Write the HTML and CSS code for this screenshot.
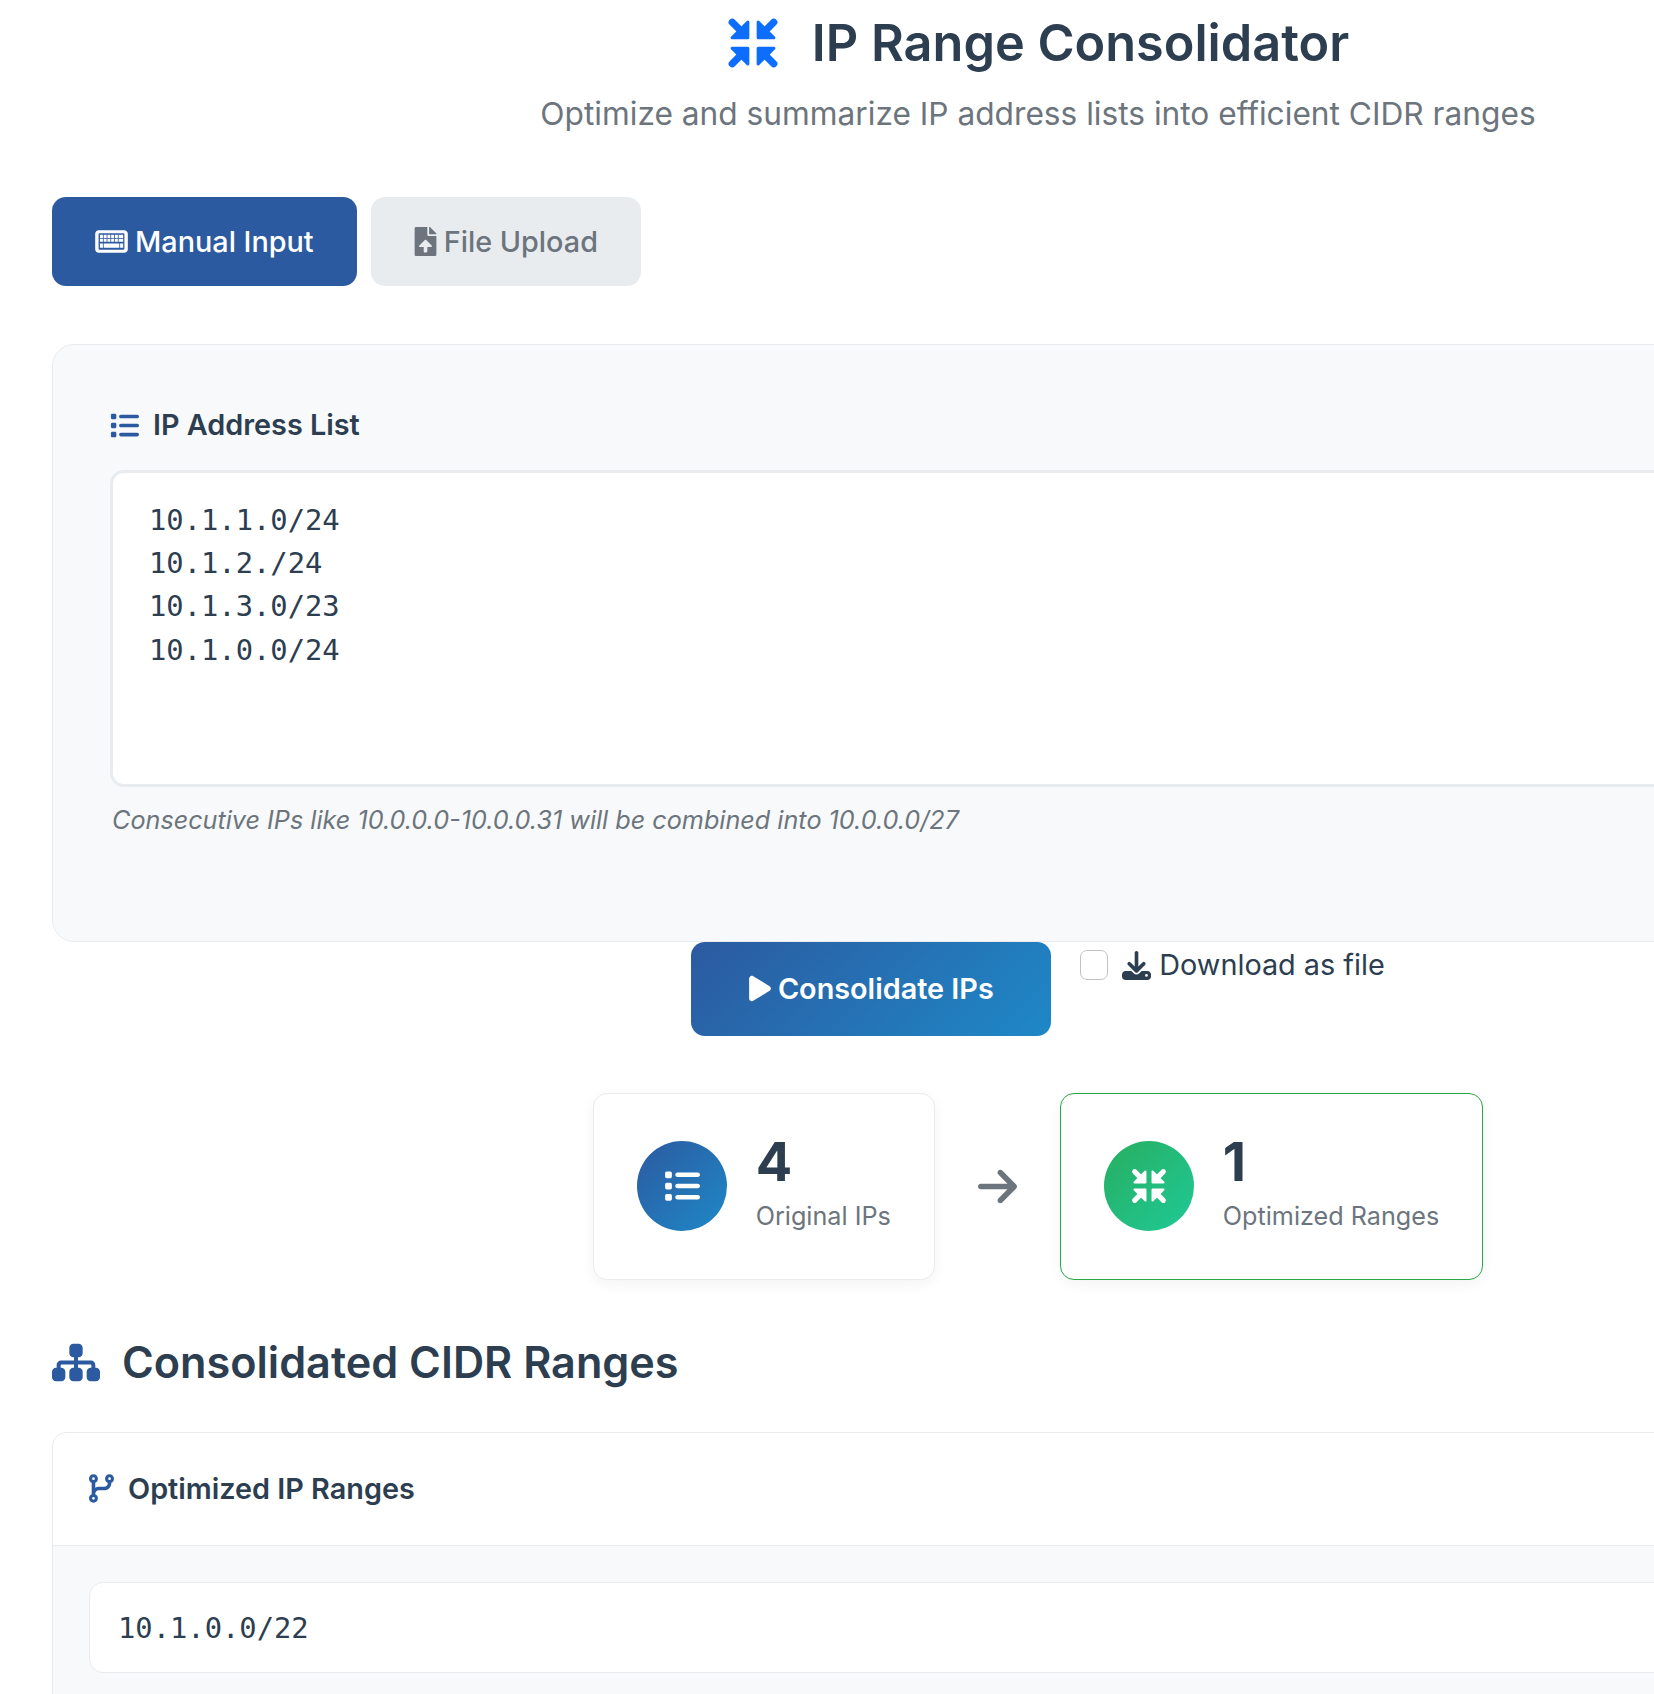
FILE: index.html
```html
<!DOCTYPE html>
<html lang="en">

<head>
  <meta charset="UTF-8">
  <title>IP Range Consolidator</title>
  <link rel="stylesheet" href="styles.css">
</head>

<body>
  <svg class="defs" width="0" height="0">
    <symbol id="i-compress" viewBox="0 0 512 512">
      <g stroke="currentColor" stroke-linejoin="round" stroke-width="30">
        <path d="M205 205H50L205 50z"/>
        <path d="M307 205H462L307 50z"/>
        <path d="M205 307H50L205 462z"/>
        <path d="M307 307H462L307 462z"/>
      </g>
      <g stroke="currentColor" stroke-linecap="round" stroke-width="72">
        <path d="M52 52L140 140"/>
        <path d="M460 52L372 140"/>
        <path d="M52 460L140 372"/>
        <path d="M460 460L372 372"/>
      </g>
    </symbol>
    <symbol id="i-keyboard" viewBox="0 0 576 512"><path fill-rule="evenodd" d="M64 56C28.700 56 0 84.700 0 120V392c0 35.300 28.700 64 64 64H512c35.300 0 64-28.700 64-64V120c0-35.300-28.700-64-64-64H64zM60 128c0-8.800 7.200-16 16-16H500c8.800 0 16 7.200 16 16V384c0 8.800-7.200 16-16 16H76c-8.800 0-16-7.200-16-16V128z"/><path d="M84 138h52v54H84zM150 138h52v54h-52zM216 138h52v54h-52zM282 138h52v54h-52zM348 138h52v54h-52zM414 138h80v54h-80zM84 206h52v54H84zM150 206h52v54h-52zM216 206h52v54h-52zM282 206h52v54h-52zM348 206h52v54h-52zM414 206h80v54h-80zM84 292h52v76H84zM150 292h276v76H150zM440 292h54v76h-54z"/></symbol>
    <symbol id="i-upload" viewBox="0 0 384 512"><path d="M224 136V0H24C10.700 0 0 10.700 0 24v464c0 13.300 10.700 24 24 24h336c13.300 0 24-10.700 24-24V160H248c-13.200 0-24-10.800-24-24zm65.180 216.010H224v80c0 8.840-7.160 16-16 16h-32c-8.840 0-16-7.160-16-16v-80H94.820c-14.280 0-21.410-17.290-11.270-27.360l96.420-95.700c6.650-6.610 17.390-6.610 24.040 0l96.420 95.700c10.150 10.070 3.030 27.360-11.250 27.360zM377 105L279.100 7c-4.500-4.500-10.600-7-17-7H256v128h128v-6.100c0-6.300-2.500-12.400-7-16.900z"/></symbol>
    <symbol id="i-list" viewBox="0 0 512 512"><path d="M40 48C26.700 48 16 58.700 16 72v48c0 13.300 10.700 24 24 24H88c13.300 0 24-10.700 24-24V72c0-13.300-10.700-24-24-24H40zM192 64c-17.700 0-32 14.300-32 32s14.300 32 32 32H480c17.700 0 32-14.300 32-32s-14.300-32-32-32H192zm0 160c-17.700 0-32 14.300-32 32s14.300 32 32 32H480c17.700 0 32-14.300 32-32s-14.300-32-32-32H192zm0 160c-17.700 0-32 14.300-32 32s14.300 32 32 32H480c17.700 0 32-14.300 32-32s-14.300-32-32-32H192zM16 232v48c0 13.300 10.700 24 24 24H88c13.300 0 24-10.700 24-24V232c0-13.300-10.700-24-24-24H40c-13.300 0-24 10.700-24 24zM40 368c-13.300 0-24 10.700-24 24v48c0 13.300 10.700 24 24 24H88c13.300 0 24-10.700 24-24V392c0-13.300-10.700-24-24-24H40z"/></symbol>
    <symbol id="i-play" viewBox="0 0 384 512"><path d="M73 39c-14.800-9.100-33.400-9.400-48.500-.9S0 62.600 0 80V432c0 17.400 9.400 33.400 24.500 41.900s33.700 8.100 48.500-.9L361 297c14.300-8.700 23-24.200 23-41s-8.700-32.200-23-41L73 39z"/></symbol>
    <symbol id="i-download" viewBox="0 0 512 512"><path d="M288 32c0-17.700-14.300-32-32-32s-32 14.300-32 32V274.700l-73.400-73.400c-12.500-12.500-32.800-12.500-45.300 0s-12.500 32.800 0 45.300l128 128c12.500 12.500 32.800 12.500 45.300 0l128-128c12.500-12.500 12.500-32.800 0-45.300s-32.800-12.500-45.300 0L288 274.700V32zM64 352c-35.300 0-64 28.700-64 64v32c0 35.300 28.700 64 64 64H448c35.300 0 64-28.700 64-64V416c0-35.300-28.700-64-64-64H346.500l-45.300 45.300c-25 25-65.500 25-90.500 0L165.500 352H64zm368 56a24 24 0 1 1 0 48 24 24 0 1 1 0-48z"/></symbol>
    <symbol id="i-arrow" viewBox="0 0 448 512"><path d="M438.600 278.600c12.500-12.500 12.500-32.800 0-45.300l-160-160c-12.500-12.500-32.800-12.500-45.300 0s-12.500 32.800 0 45.300L338.800 224 32 224c-17.700 0-32 14.300-32 32s14.300 32 32 32l306.700 0L233.400 393.400c-12.500 12.500-12.500 32.800 0 45.300s32.800 12.500 45.300 0l160-160z"/></symbol>
    <symbol id="i-sitemap" viewBox="0 0 576 512"><path d="M208 80c0-26.500 21.500-48 48-48h64c26.500 0 48 21.500 48 48v64c0 26.500-21.500 48-48 48h-8v40H464c30.900 0 56 25.100 56 56v32h8c26.500 0 48 21.500 48 48v64c0 26.500-21.500 48-48 48H464c-26.500 0-48-21.500-48-48V368c0-26.500 21.500-48 48-48h8V288c0-4.400-3.600-8-8-8H312v40h8c26.500 0 48 21.500 48 48v64c0 26.500-21.500 48-48 48H256c-26.500 0-48-21.500-48-48V368c0-26.500 21.500-48 48-48h8V280H112c-4.400 0-8 3.600-8 8v32h8c26.500 0 48 21.500 48 48v64c0 26.500-21.500 48-48 48H48c-26.500 0-48-21.500-48-48V368c0-26.500 21.500-48 48-48h8V288c0-30.900 25.100-56 56-56H264V192h-8c-26.500 0-48-21.500-48-48V80z"/></symbol>
    <symbol id="i-branch" viewBox="0 0 448 512"><path d="M80 104a24 24 0 1 0 0-48 24 24 0 1 0 0 48zm80-24c0 32.800-19.700 61-48 73.300v87.800c18.800-10.900 40.700-17.100 64-17.100h96c35.300 0 64-28.700 64-64v-6.700C307.700 141 288 112.800 288 80c0-44.200 35.800-80 80-80s80 35.800 80 80c0 32.800-19.700 61-48 73.300V160c0 70.700-57.300 128-128 128H176c-35.300 0-64 28.700-64 64v6.700c28.300 12.300 48 40.500 48 73.300c0 44.200-35.800 80-80 80s-80-35.800-80-80c0-32.800 19.700-61 48-73.300V352 153.300C19.700 141 0 112.800 0 80C0 35.800 35.800 0 80 0s80 35.800 80 80zm232 0a24 24 0 1 0 -48 0 24 24 0 1 0 48 0zM80 456a24 24 0 1 0 0-48 24 24 0 1 0 0 48z"/></symbol>
  </svg>

  <div class="page">
    <header class="top">
      <h1 class="title">
        <svg class="title-icon"><use href="#i-compress"></use></svg>
        IP Range Consolidator
      </h1>
      <p class="subtitle">Optimize and summarize IP address lists into efficient CIDR ranges</p>
    </header>

    <div class="tabs">
      <button class="tab active"><svg class="tab-icon key"><use href="#i-keyboard"></use></svg>Manual Input</button>
      <button class="tab"><svg class="tab-icon up"><use href="#i-upload"></use></svg>File Upload</button>
    </div>

    <section class="input-card">
      <label class="field-label" for="ips"><svg class="label-icon"><use href="#i-list"></use></svg>IP Address List</label>
      <textarea id="ips" class="ip-box" spellcheck="false">10.1.1.0/24
10.1.2./24
10.1.3.0/23
10.1.0.0/24</textarea>
      <p class="hint">Consecutive IPs like 10.0.0.0-10.0.0.31 will be combined into 10.0.0.0/27</p>
    </section>

    <div class="actions">
      <button class="run"><svg class="run-icon"><use href="#i-play"></use></svg>Consolidate IPs</button>
      <label class="check">
        <input type="checkbox" class="check-box">
        <svg class="check-icon"><use href="#i-download"></use></svg>
        Download as file
      </label>
    </div>

    <div class="stats">
      <div class="stat">
        <div class="stat-circle blue"><svg class="stat-icon"><use href="#i-list"></use></svg></div>
        <div class="stat-text">
          <div class="stat-num">4</div>
          <div class="stat-label">Original IPs</div>
        </div>
      </div>
      <svg class="stat-arrow"><use href="#i-arrow"></use></svg>
      <div class="stat done">
        <div class="stat-circle green"><svg class="stat-icon"><use href="#i-compress"></use></svg></div>
        <div class="stat-text">
          <div class="stat-num">1</div>
          <div class="stat-label">Optimized Ranges</div>
        </div>
      </div>
    </div>

    <h2 class="result-title"><svg class="result-icon"><use href="#i-sitemap"></use></svg>Consolidated CIDR Ranges</h2>

    <section class="result-card">
      <div class="result-head"><svg class="head-icon"><use href="#i-branch"></use></svg>Optimized IP Ranges</div>
      <div class="result-body">
        <div class="range">10.1.0.0/22</div>
      </div>
    </section>
  </div>
</body>

</html>
```

FILE: styles.css
```css
* {
  margin: 0;
  padding: 0;
  box-sizing: border-box;
}

html,
body {
  height: 1694px;
  overflow: hidden;
  background: #fff;
}

body {
  font-family: "Inter", "Noto Sans", sans-serif;
  color: #2c3e50;
}

.defs {
  position: absolute;
}

svg {
  fill: currentColor;
  flex: none;
}

/* the page is wider than the window, its right part gets cut */
.page {
  width: 1972px;
  margin-left: 52px;
}

.top {
  text-align: center;
  padding-top: 12px;
}

.title {
  font-size: 50.4px;
  font-weight: 600;
  line-height: 62px;
  display: flex;
  justify-content: center;
  align-items: center;
  gap: 33px;
}

.title-icon {
  width: 52px;
  height: 52px;
  color: #0d6efd;
}

.subtitle {
  font-size: 31.68px;
  line-height: 44px;
  color: #6c757d;
  margin-top: 18px;
}

.tabs {
  display: flex;
  gap: 14px;
  margin-top: 61px;
}

.tab {
  height: 89px;
  padding: 0 43px;
  border: none;
  border-radius: 14px;
  background: #e9ecef;
  color: #6c757d;
  font-family: inherit;
  font-size: 28.8px;
  font-weight: 500;
  display: flex;
  align-items: center;
  gap: 7px;
}

.tab.active {
  background: #2c5aa0;
  color: #fff;
}

.tab-icon.key {
  width: 33px;
  height: 29px;
}

.tab-icon.up {
  width: 23px;
  height: 29px;
}

.input-card {
  margin-top: 58px;
  height: 598px;
  padding: 58px 57px 0;
  background: #f8f9fa;
  border: 1px solid #e9ecef;
  border-radius: 22px;
}

.field-label {
  display: flex;
  align-items: center;
  gap: 14px;
  font-size: 28.8px;
  font-weight: 600;
  line-height: 44px;
}

.label-icon {
  width: 29px;
  height: 29px;
  color: #2c5aa0;
}

.ip-box {
  display: block;
  width: 100%;
  height: 317px;
  margin-top: 23px;
  padding: 26px 36px;
  border: 3px solid #e9ecef;
  border-radius: 14px;
  background: #fff;
  color: #2c3e50;
  font-family: "DejaVu Sans Mono", monospace;
  font-size: 28.8px;
  line-height: 43.2px;
  resize: none;
  outline: none;
}

.hint {
  margin: 15px 0 0 2px;
  font-size: 25.2px;
  line-height: 36px;
  font-style: italic;
  color: #6c757d;
}

.actions {
  display: flex;
  justify-content: center;
  align-items: flex-start;
  gap: 29px;
}

.run {
  width: 360px;
  height: 94px;
  padding-bottom: 2px;
  border: none;
  border-radius: 14px;
  background: linear-gradient(135deg, #2c5aa0, #1e88c7);
  color: #fff;
  font-family: inherit;
  font-size: 28.8px;
  font-weight: 600;
  display: flex;
  justify-content: center;
  align-items: center;
  gap: 7px;
}

.run-icon {
  width: 22px;
  height: 29px;
}

.check {
  display: flex;
  align-items: center;
  gap: 8px;
  margin-top: 1px;
  font-size: 28.8px;
  line-height: 44px;
}

.check-box {
  appearance: none;
  width: 28px;
  height: 30px;
  margin-right: 6px;
  border: 1px solid #bfc3c7;
  border-radius: 7px;
  background: #fff;
}

.check-icon {
  width: 29px;
  height: 29px;
}

.stats {
  display: flex;
  justify-content: center;
  align-items: center;
  gap: 43px;
  margin-top: 57px;
}

.stat {
  display: flex;
  align-items: center;
  gap: 29px;
  height: 187px;
  padding: 0 43px;
  background: #fff;
  border: 1px solid #e9ecef;
  border-radius: 14px;
  box-shadow: 0 4px 14px rgba(0, 0, 0, 0.05);
}

.stat.done {
  border-color: #28a745;
}

.stat-circle {
  width: 90px;
  height: 90px;
  margin-bottom: 2px;
  border-radius: 50%;
  color: #fff;
  display: flex;
  justify-content: center;
  align-items: center;
}

.stat-circle.blue {
  background: linear-gradient(135deg, #2c5aa0, #1e88c7);
}

.stat-circle.green {
  background: linear-gradient(135deg, #27ae60, #20c997);
}

.stat-icon {
  width: 36px;
  height: 36px;
}

.stat-text {
  padding-bottom: 6px;
}

.stat-num {
  font-size: 54px;
  font-weight: 700;
  line-height: 60px;
}

.stat-label {
  font-size: 25.2px;
  line-height: 38px;
  color: #6c757d;
  margin-top: 5px;
}

.stat-arrow {
  width: 39px;
  height: 45px;
  color: #6c757d;
}

.result-title {
  display: flex;
  align-items: center;
  gap: 22px;
  margin-top: 49px;
  font-size: 43.2px;
  font-weight: 600;
  line-height: 66px;
}

.result-icon {
  width: 48px;
  height: 43px;
  color: #2c5aa0;
}

.result-card {
  margin-top: 37px;
  background: #fff;
  border: 1px solid #e9ecef;
  border-radius: 14px;
}

.result-head {
  height: 113px;
  padding: 0 36px 2px;
  display: flex;
  align-items: center;
  gap: 14px;
  font-size: 28.8px;
  font-weight: 600;
  border-bottom: 1px solid #e9ecef;
}

.head-icon {
  width: 25px;
  height: 29px;
  color: #2c5aa0;
}

.result-body {
  padding: 36px;
  height: 400px;
  background: #f8f9fa;
}

.range {
  height: 91px;
  padding: 0 28px;
  display: flex;
  align-items: center;
  background: #fff;
  border: 1px solid #e9ecef;
  border-radius: 14px;
  font-family: "DejaVu Sans Mono", monospace;
  font-size: 28.8px;
}
```
